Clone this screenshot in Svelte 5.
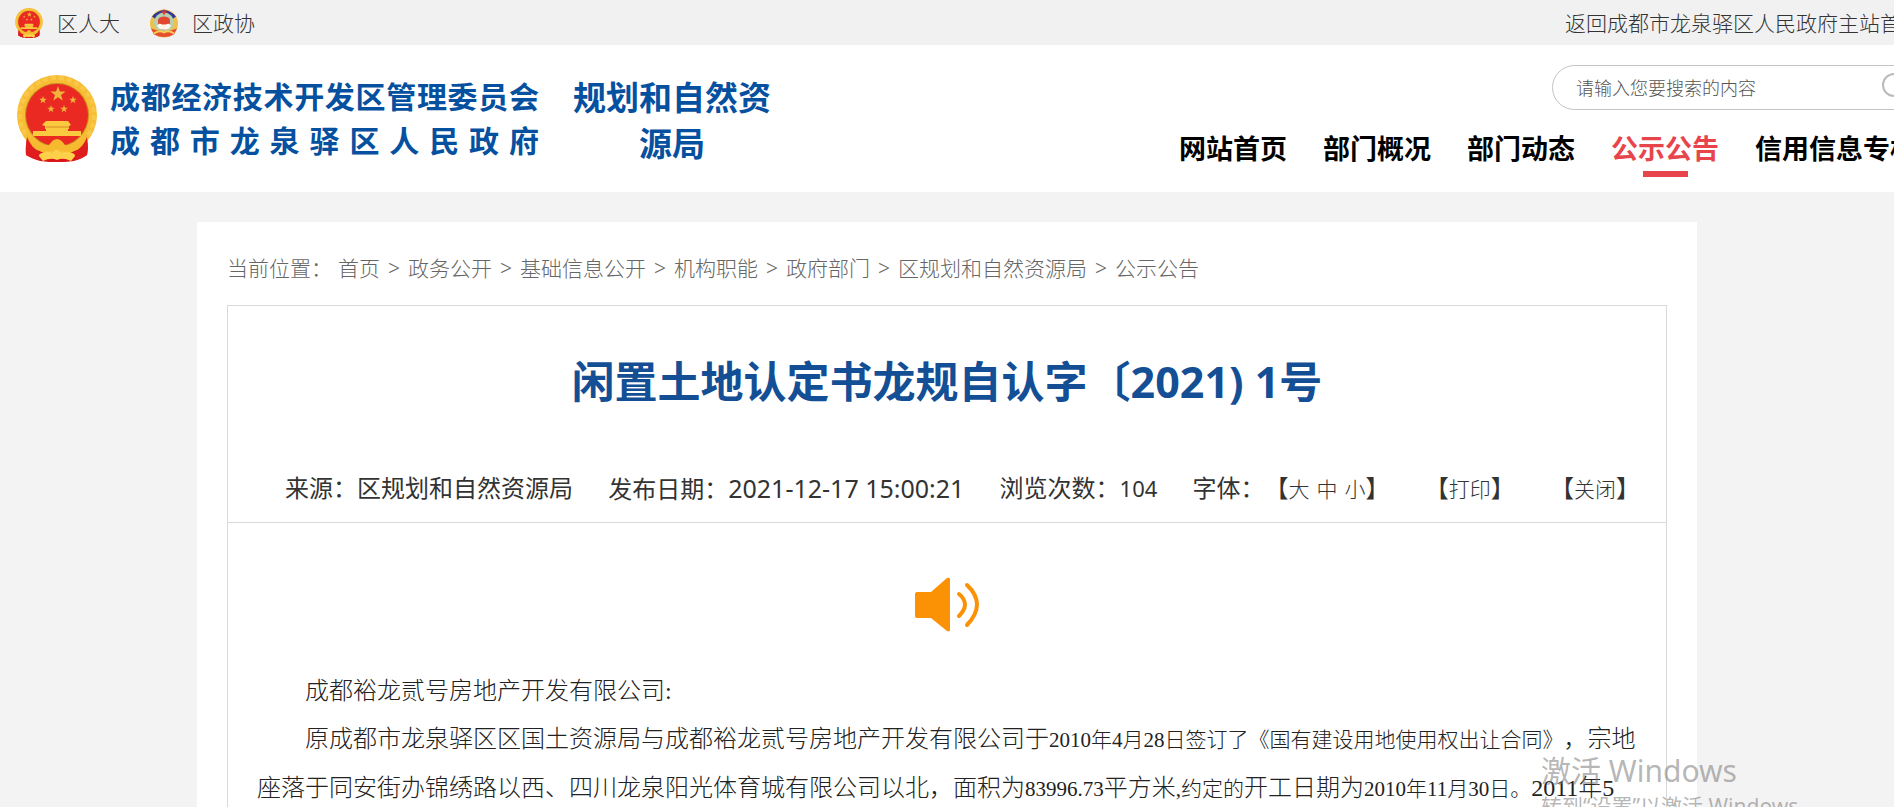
<script lang="ts">
  const navItems = ['网站首页', '部门概况', '部门动态', '公示公告', '信用信息专栏'];
  const activeItem = '公示公告';

  const crumbs = ['首页', '政务公开', '基础信息公开', '机构职能', '政府部门', '区规划和自然资源局', '公示公告'];

  let keyword = $state('');
</script>

{#snippet star(x: number, y: number, r: number)}
  <path
    transform="translate({x} {y}) scale({r})"
    d="M0-1 .24-.32.95-.31.38.12.59.81 0 .4-.59.81-.38.12-.95-.31-.24-.32Z"
    fill="#f0b43c"
  />
{/snippet}

{#snippet emblem()}
  <svg class="emblem" viewBox="0 0 82 87" aria-hidden="true">
    <path d="M11 58 10 80q7 4 14 6l9 1h16l9-1q7-2 13-6l0-22Z" fill="#d8161b" />
    <path d="M16 66v16M66 66v16" stroke="#a90f14" stroke-width="2" />
    <circle cx="41" cy="40" r="40" fill="#f6bd35" />
    <circle cx="41" cy="40" r="37" fill="none" stroke="#f9c848" stroke-width="4" stroke-dasharray="5 3" />
    <circle cx="41" cy="40" r="32" fill="#c98a1c" />
    <circle cx="41" cy="40" r="31" fill="#ea2a22" />
    {@render star(42, 19, 8)}
    {@render star(27, 25, 4)}
    {@render star(57, 25, 4)}
    {@render star(35, 34, 4)}
    {@render star(48, 34, 4)}
    <path d="M30 46h22l3 4-2 1v3h-1v2h13v5H17v-5h13v-2h-1v-3l-3-1Z" fill="#fbc940" />
    <path d="M30 52h23" stroke="#d98a20" />
    <path d="M11 60q12 12 22 10 4-6 8-6t8 6q10 2 22-10v8q-10 10-22 9-4-3-8-3t-8 3Q21 78 11 68Z" fill="#f7b92e" />
    <path d="M22 80q9-6 14-2l5-3 5 3q5-4 14 2l-5 6q-8-4-14-1-6-3-14 1Z" fill="#ffd04a" />
    <path d="M11 62q-2 12-1 18 6 4 12 5l2-8q-8-3-13-15ZM71 62q2 12 0 18-5 4-11 5l-2-8q9-4 13-15Z" fill="#df1d1f" />
  </svg>
{/snippet}

<div class="page">
  <div class="topbar">
    <div class="topbar-links">
      <a class="org" href="#renda"><span class="org-icon">{@render emblem()}</span>区人大</a>
      <a class="org" href="#zhengxie">
        <span class="org-icon">
          <svg class="emblem" viewBox="0 0 30 29" aria-hidden="true">
            <circle cx="15" cy="15" r="14" fill="#edc14b" />
            <path d="M3 8Q15-5 27 8l-4 3Q15 2 7 11Z" fill="#30359a" />
            <circle cx="15" cy="14" r="10" fill="#b6cfae" />
            <path d="M9 14q-1-6 6-6t6 6-6 7-6-7Z" fill="#e34631" />
            <path d="M8 17q2-3 5-1h4q3-2 5 1-1 4-7 4t-7-4Z" fill="#fff5e8" />
            <path d="m15 0 1 3h3l-3 2-1 2-1-2-3-2h3Z" fill="#e03a2c" />
            <path d="M2 20q13 5 26 0l-3 6q-10 5-20 0Z" fill="#e4502d" />
            <path d="M5 25q5-4 10-1 5-3 10 1" fill="none" stroke="#f7cf56" stroke-width="2" />
          </svg>
        </span>区政协
      </a>
    </div>
    <a class="home-link" href="#main">返回成都市龙泉驿区人民政府主站首页</a>
  </div>

  <header class="masthead">
    <a class="brand" href="#home">
      <span class="brand-emblem">{@render emblem()}</span>
      <span class="brand-text">
        <span class="brand-line">成都经济技术开发区管理委员会</span>
        <span class="brand-line">成都市龙泉驿区人民政府</span>
      </span>
    </a>
    <h2 class="bureau">规划和自然资源局</h2>

    <div class="masthead-right">
      <form class="search" onsubmit={(e) => e.preventDefault()}>
        <input type="text" aria-label="搜索" placeholder="请输入您要搜索的内容" bind:value={keyword} />
        <button type="submit" aria-label="搜索">
          <svg viewBox="0 0 30 30" width="30" height="30" aria-hidden="true">
            <circle cx="12" cy="12" r="11" fill="none" stroke="#bbb" stroke-width="2" />
            <path d="m20 20 8 8" stroke="#bbb" stroke-width="3" />
          </svg>
        </button>
      </form>
      <nav>
        {#each navItems as item}
          <a href="#nav" class:active={item === activeItem}>{item}</a>
        {/each}
      </nav>
    </div>
  </header>

  <main>
    <div class="crumbs">
      <span class="crumbs-label">当前位置：</span>
      {#each crumbs as crumb, i}
        {#if i > 0}<span>&gt;</span>{/if}
        <a href="#crumb">{crumb}</a>
      {/each}
    </div>

    <article>
      <h1>闲置土地认定书龙规自认字〔2021) 1号</h1>

      <div class="meta">
        <span>来源：区规划和自然资源局</span>
        <span>发布日期：<time>2021-12-17 15:00:21</time></span>
        <span>浏览次数：<span class="views">104</span></span>
        <span class="font-size">字体：【<button>大</button><button>中</button><button>小</button>】</span>
        <span>【<button>打印</button>】</span>
        <span>【<button>关闭</button>】</span>
      </div>

      <button class="speaker" aria-label="朗读">
        <svg viewBox="0 0 64 55" width="64" height="55" aria-hidden="true">
          <path d="M2 15h14L32 1q3-1 3 1v51q0 2-3 1L16 41H2q-2 0-2-2V17q0-2 2-2Z" fill="#fb9205" />
          <path d="M44 17q12 10 0 22M52 8q20 19 0 40" fill="none" stroke="#fb9205" stroke-width="4" stroke-linecap="round" />
        </svg>
      </button>

      <div class="content">
        <p>成都裕龙贰号房地产开发有限公司:</p>
        <p>
          原成都市龙泉驿区区国土资源局与成都裕龙贰号房地产开发有限公司于<small>2010年4月28日签订了《国有建设用地使用权出让合同》</small>，宗地座落于同安街办锦绣路以西、四川龙泉阳光体育城有限公司以北，面积为<small>83996.73</small>平方米<small>,约定的</small>开工日期为<small>2010年11月30日。</small>2011年5
        </p>
      </div>
    </article>
  </main>

  <div class="watermark">
    <div class="watermark-title">激活 Windows</div>
    <div>转到“设置”以激活 Windows。</div>
  </div>
</div>

<style>
  :global(body) {
    background: #f3f3f3;
  }
  .page {
    position: relative;
    height: 100vh;
    overflow: hidden;
    background: #f3f3f3;
    color: #333;
    font-family: 'Noto Sans', 'Noto Sans CJK SC', sans-serif;
    font-size: 21px;
    text-spacing-trim: space-all;
  }
  a {
    color: inherit;
    text-decoration: none;
  }
  button {
    padding: 0;
    border: none;
    background: none;
    color: inherit;
    font-family: inherit;
    font-size: 21px;
    cursor: pointer;
  }
  .emblem {
    display: block;
    width: 100%;
    height: 100%;
  }

  .topbar {
    display: flex;
    justify-content: space-between;
    align-items: center;
    height: 45px;
    margin-right: -28px;
    padding-left: 14px;
    background: #f1f1f1;
    color: #333;
    font-weight: 300;
    line-height: 28px;
  }
  .topbar-links {
    display: flex;
    gap: 29px;
  }
  .org {
    display: flex;
    align-items: center;
    gap: 13px;
  }
  .org-icon {
    width: 30px;
    height: 30px;
  }

  .masthead {
    display: flex;
    height: 147px;
    margin-right: -30px;
    padding-left: 16px;
    background: #fff;
  }
  .brand {
    display: flex;
    gap: 12px;
    padding-top: 30px;
    color: #0650a0;
    font-weight: 700;
  }
  .brand-emblem {
    width: 82px;
    height: 87px;
  }
  .brand-text {
    width: 429px;
    font-size: 30px;
    line-height: 44px;
  }
  .brand-line {
    display: block;
    text-align-last: justify;
  }
  .bureau {
    width: 200px;
    margin: 30px 0 0 33px;
    color: #0650a0;
    font-size: 33px;
    line-height: 46px;
    text-align: center;
  }
  .masthead-right {
    display: flex;
    flex-direction: column;
    align-items: flex-end;
    margin-left: auto;
    padding: 20px 7px 0 0;
  }
  .search {
    display: flex;
    align-items: center;
    box-sizing: border-box;
    width: 365px;
    height: 45px;
    padding: 0 4px 0 23px;
    border: 1px solid #c4c4c4;
    border-radius: 23px;
  }
  .search input {
    flex: 1;
    min-width: 0;
    padding: 0;
    border: none;
    outline: none;
    background: none;
    font-family: inherit;
    font-size: 18px;
    font-weight: 300;
  }
  .search input::placeholder {
    color: #555;
  }
  .search button {
    height: 30px;
  }
  nav {
    display: flex;
    gap: 36px;
    margin-top: 18px;
    color: #000;
    font-size: 27px;
    font-weight: 700;
    line-height: 42px;
  }
  nav a {
    white-space: nowrap;
  }
  .active {
    color: #e7454b;
  }
  .active::after {
    content: '';
    display: block;
    width: 45px;
    height: 6px;
    margin: 1px auto 0;
    background: #e7454b;
  }

  main {
    box-sizing: border-box;
    max-width: 1500px;
    min-height: 100vh;
    margin: 30px auto 0;
    padding: 30px;
    background: #fff;
  }
  .crumbs {
    display: flex;
    gap: 8px;
    color: #666;
    font-weight: 300;
    line-height: 32px;
  }
  .crumbs-label {
    margin-right: -2px;
  }
  article {
    min-height: 100vh;
    margin-top: 21px;
    border: 1px solid #d9d9d9;
  }
  h1 {
    margin: 46px 0 0;
    color: #144f96;
    font-size: 43px;
    line-height: 60px;
    text-align: center;
  }
  .meta {
    display: flex;
    justify-content: space-between;
    margin-top: 56px;
    padding: 0 26px 13px 57px;
    border-bottom: 1px solid #d9d9d9;
    font-size: 24px;
    line-height: 40px;
  }
  .meta button {
    font-weight: 300;
  }
  time {
    font-size: 25px;
  }
  .views {
    font-size: 22px;
  }
  .font-size button + button {
    margin-left: 7px;
  }
  .speaker {
    display: block;
    margin: 54px auto 0;
  }
  .speaker svg {
    display: block;
  }
  .content {
    padding: 35px 29px;
    color: #222;
    font-family: 'Liberation Serif', 'Noto Sans CJK SC', serif;
    font-size: 24px;
    font-weight: 300;
    line-height: 48px;
  }
  .content p {
    margin: 0;
    text-indent: 2em;
  }
  .content small {
    font-size: 21px;
  }

  .watermark {
    position: absolute;
    right: 78px;
    bottom: -14px;
    width: 275px;
    color: rgba(120, 120, 120, 0.55);
    font-size: 21px;
    line-height: 30px;
    white-space: nowrap;
    pointer-events: none;
  }
  .watermark-title {
    font-size: 30px;
    line-height: 40px;
  }
</style>
